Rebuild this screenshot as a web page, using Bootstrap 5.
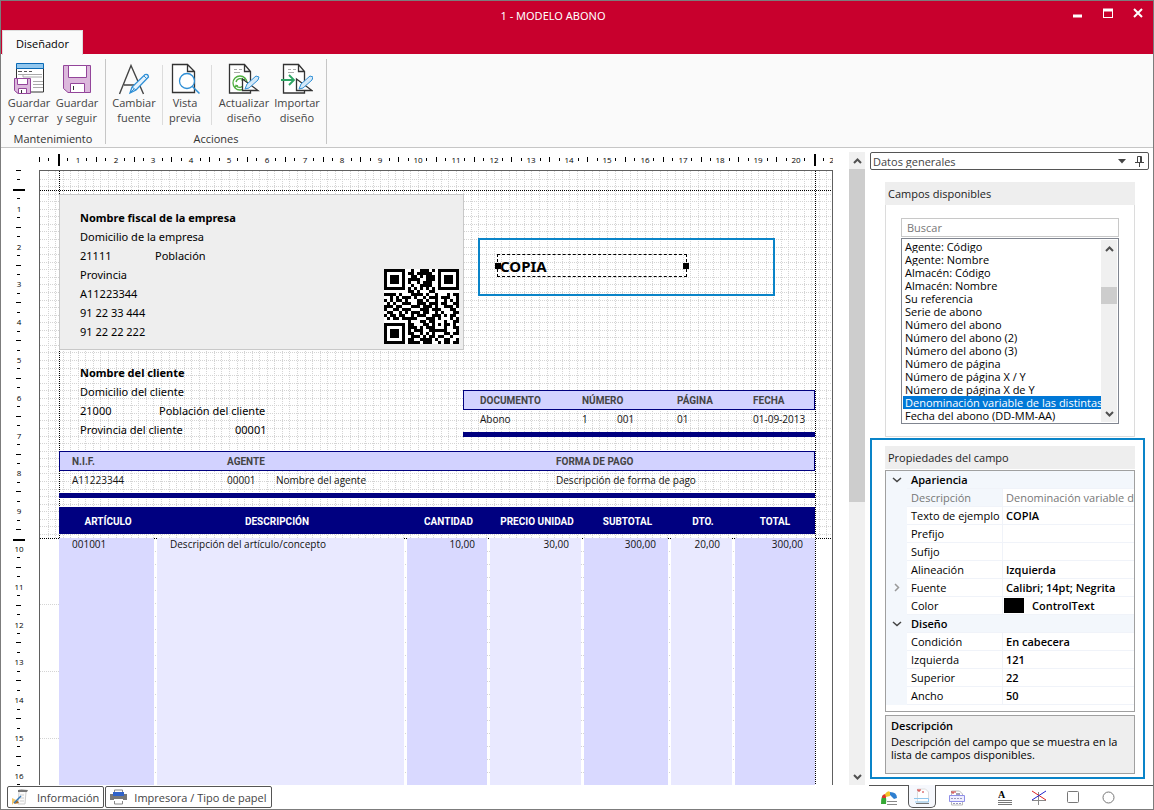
<!DOCTYPE html>
<html lang="es">
<head>
<meta charset="utf-8">
<meta name="viewport" content="width=device-width, initial-scale=1">
<title>1 - MODELO ABONO</title>
<link href="https://cdn.jsdelivr.net/npm/bootstrap@5.3.0/dist/css/bootstrap.min.css" rel="stylesheet">
<style>
body{font:11px/13px "Open Sans","Noto Sans",sans-serif;color:#000;background:#fff}
button,input,select{font:inherit;color:inherit}
.app{height:100vh;border:1px solid #7c7c7c}
/* title bar */
.titlebar{background:#c8002d;height:53px;color:#fff}
.titlebar .caption{font:11px/30px "Noto Sans",sans-serif}
.win-controls{right:0;top:0}
.win-controls button,.plain{background:none;border:0;padding:0;display:flex;align-items:center;justify-content:center}
.win-controls button{width:30px;height:24px}
.ribbon-tab{left:1px;bottom:-1px;width:81px;height:25px;background:#fafafa;border:1px solid #ddd;border-bottom:0;padding:0;color:#000}
/* ribbon */
.ribbon{background:#fafafa;border-bottom:1px solid #c6c6c6;height:94px;padding-top:5px;color:#444}
.ribbon-group{border-right:1px solid #c6c6c6;height:85px}
.ribbon-group .group-name{color:#333;line-height:16px;margin-top:6px}
.tool{background:none;border:0;padding:4px 0 0;line-height:15px;color:#444;text-align:center}
.tool svg{display:block;margin:0 auto}
.w44{width:44px}.w48{width:48px}.w50{width:50px}.w56{width:56px}
.rule-v{width:1px;background:#dcdcdc;height:60px;margin:6px 0 0}
/* canvas */
.vruler{width:38px}
.canvas{width:794px}
.paper{height:1123px;border:1px solid #606060;padding:23px 17px 0 19px}
.sheet-text{font-family:"Noto Sans","Open Sans",sans-serif;line-height:19px}
.company{width:405px;height:156px;background:#eee;border:1px solid #c8c8c8;padding:13px 4px 5px 20px}
.client{padding:13px 0 0 21px;height:101px}
.tabbed{display:inline-block}
.guide-v{top:0;bottom:0;width:1px;background:repeating-linear-gradient(#000 0 1px,transparent 1px 2px)}
.guide-h{left:0;right:0;height:1px;background:repeating-linear-gradient(90deg,#000 0 1px,transparent 1px 2px)}
.doc-table{table-layout:fixed;border-collapse:separate;border-spacing:0;font-size:10px;line-height:13px;width:100%;color:#111}
.doc-table th{font-family:Roboto,sans-serif;font-weight:700;color:#444}
.doc-table th,.doc-table td{padding:0;white-space:nowrap}
.band thead th{background:#d2d2ff;border:solid #000080;border-width:1px 0;height:20px}
.band thead th:first-child{border-left-width:1px}
.band thead th:last-child{border-right-width:1px}
.band tbody td{height:27px;padding-bottom:4px;border-bottom:5px solid #000080}
.doc-head{width:352px;right:17px;top:219px}
.band .lead-cell{padding-left:16px}
.band td.lead-cell{padding-left:17px}
.band .lead-cell-sm{padding-left:12px}
.band td.lead-cell-sm{padding-left:13px}
.lines thead th{background:#000080;color:#fff;height:27px;text-align:center;padding-top:1px}
.lines .wide-col{padding-right:10px}
.lines tbody td{height:570px;vertical-align:top;border-top:4px solid transparent;border-right:3px solid transparent;background:#e9e9ff;background-clip:padding-box}
.lines tbody td:nth-child(odd){background-color:#d9d9ff}
.lines tbody td:last-child{border-right:0}
.lines .num{text-align:right;padding-right:12px}
.callout{left:438px;top:67px;width:297px;height:58px;border:2px solid #0a84c8;padding:14px 17px}
.field{width:190px;height:23px;border:1px dashed #000;font:bold 15px/22px "Noto Sans",sans-serif;padding-left:2px;position:relative}
.grip{width:6px;height:6px;background:#000;position:absolute;top:8px}
.grip.start-grip{left:-3px}.grip.end-grip{right:-3px}
/* scrollbars */
.scroll{width:16px;background:#f0f0f0}
.scroll button{width:100%;height:17px}
.thumb{background:#cdcdcd;flex:5 1 0}
.track{flex:4 1 0}
/* side panel */
.side{width:284px;margin-left:4px}
.combo{border:1px solid #555;border-radius:2px;height:18px;margin:4px 4px 0 1px}
.combo select{appearance:none;border:0;background:none;padding:0 2px;color:#444;outline:0}
.group-title{background:#eee;height:23px;line-height:24px;padding-left:3px;color:#222;font-size:11px;margin:0;font-weight:400}
.fields-box{margin:12px 18px 0 16px}
.fields-body{border:1px solid #dcdcdc;border-top:0;height:232px;padding:13px 15px}
.search{width:100%;height:19px;border:1px solid #c8c8c8;padding:0 5px;outline:0;display:block}
.search::placeholder{color:#777;opacity:1}
.listbox{border:1px solid #808590;height:186px;margin-top:1px;padding:1px;overflow:hidden}
.listbox .list-group{width:198px;overflow:hidden}
.listbox .list-group-item{padding:0 2px;border:0;line-height:13px;white-space:nowrap;color:#000;border-radius:0}
.listbox .list-group-item.active{background:#0078d7;color:#fff;margin:0}
.list-thumb{height:17px;background:#cdcdcd;margin-top:30px}
.props{border:2px solid #0a84c8;margin:1px 8px 0 1px;padding:6px 8px 3px 13px;height:341px}
.props-grid{border:1px solid #a0a0a0;height:242px;margin-top:1px;overflow:hidden}
.ptable{table-layout:fixed;width:100%;border-collapse:separate;border-spacing:0;line-height:17px}
.ptable th,.ptable td{height:18px;padding:0 0 0 4px;font-weight:400;white-space:nowrap;overflow:hidden;border-bottom:1px solid #f0f3f9}
.ptable th+td{border-left:1px solid #f0f3f9;padding-left:3px;font-weight:600}
.ptable td:first-child{background:#f3f7fc;padding:0;border-color:#f3f7fc}
.ptable th{text-align:left}
.ptable .cat>*{background:#f3f7fc;font-weight:600}
.ptable .off{color:#777}
.ptable .off th{background:#f3f7fc}.ptable .off th+td{font-weight:400}
.ptable svg{display:block;margin:auto}
.swatch{display:inline-block;width:20px;height:15px;background:#000;vertical-align:top;margin:1px 8px 0 -2px}
.hint{background:#eee;border:1px solid #a0a0a0;height:59px;margin-top:3px;padding:3px 5px}
.hint b{font-weight:600;display:block;margin-bottom:3px}
/* bottom */
.status{height:24px}
.status .tabbtn{height:22px;border:1px solid #555;border-radius:2px;background:#fff;color:#444;display:flex;align-items:center;gap:7px;padding:0 4px;margin-top:1px}
.tools{width:284px;border-top:1px solid #555;padding-left:2px}
.tools button{height:23px}
.w35{width:35px}.w36{width:36px}.w41{width:41px}
.tools .current{border:1px solid #555;border-top:0;border-radius:0 0 5px 5px;background:#f6f8fd;width:28px;margin:-1px 0 0 1px}
</style>
</head>
<body>
<div class="app d-flex flex-column overflow-hidden">
  <header class="titlebar position-relative flex-shrink-0">
    <div class="caption text-center pe-5"><span>1 - MODELO ABONO</span></div>
    <div class="win-controls position-absolute d-flex">
      <button aria-label="Minimizar"><svg width="10" height="10"><path d="M0 8h9" stroke="#fff" stroke-width="3"/></svg></button>
      <button aria-label="Maximizar"><svg width="10" height="10" fill="none" stroke="#fff"><path d="M.5 9.5v-8M9.5 1v8.5M0 9.500h10"/><path d="M0 2h10" stroke-width="3"/></svg></button>
      <button aria-label="Cerrar"><svg width="10" height="10"><path d="M1 1l8 8M9 1L1 9" stroke="#fff" stroke-width="2"/></svg></button>
    </div>
    <button class="ribbon-tab position-absolute">Diseñador</button>
  </header>

  <div class="ribbon d-flex flex-shrink-0">
    <section class="ribbon-group px-1">
      <div class="d-flex">
        <button class="tool w48"><svg width="32" height="32" fill="none"><path d="M3.500 5v24h27V5" fill="#fff" stroke="#333"/><path d="M3.500.5h27v5h-27z" fill="#92c7ee" stroke="#0a6ab6"/><path d="M5 11.500h24M10 11v3h19M20 18.500h10M20 21.500h10M20 24.500h10" stroke="#aaa"/><path d="M5 8.500h4m2 0h3m2 0h3" stroke="#555"/><path d="M1.500 15.500h16v15H5l-3.500-3z" fill="#dcb8dc" stroke="#93459a"/><path d="M4.500 15.500h10v6h-10zM5.500 25.500h8v5h-8z" fill="#fff" stroke="#93459a"/><path d="M8.500 27v3" stroke="#333"/></svg>Guardar<br>y cerrar</button>
        <button class="tool w48"><svg width="32" height="32" fill="none" stroke="#93459a"><path d="M2.500 2.500h27v27H7l-4.500-4z" fill="#dcb8dc"/><path d="M7.500 2.500h18v12h-18zM9.500 20.500h14v9h-14z" fill="#fff"/><path d="M12.500 23v4" stroke="#333"/></svg>Guardar<br>y seguir</button>
      </div>
      <div class="group-name text-center">Mantenimiento</div>
    </section>
    <section class="ribbon-group">
      <div class="d-flex">
        <button class="tool w56"><svg width="32" height="32" fill="none" stroke="#444"><path d="M1.500 31L13 2.500 25.500 31M6 22h15" stroke-width="1.400"/><path d="M12 30l2-6L27 11.500q3-1 3.500 2.500L18 27z" fill="#e4f1fb" stroke="#2f8fd6" stroke-width="1.300"/><path d="M14 24l4 3M26 13l3 3M12 30l4-4" stroke="#2f8fd6"/></svg>Cambiar<br>fuente</button>
        <div class="rule-v"></div>
        <button class="tool w44 mx-0"><svg width="32" height="32" fill="none"><path d="M3.500 1.500h15l7 7v21h-22zM18.500 1.500v7h7" fill="#fff" stroke="#333" stroke-width="1.300"/><circle cx="18" cy="18" r="7.500" fill="#fff" stroke="#2f8fd6" stroke-width="1.300"/><path d="M23.500 23.500l7 7" stroke="#2f8fd6" stroke-width="1.500"/></svg>Vista<br>previa</button>
        <div class="rule-v ms-1 me-1"></div>
        <button class="tool w56"><svg width="32" height="32" fill="none"><path d="M1.500 30V1.500h15l6 7V30zM16.500 1.500v7h6" fill="#fff" stroke="#333" stroke-width="1.300"/><path d="M6 6.500h3m2 0h3M6 9.500h6" stroke="#aaa"/><circle cx="12" cy="20" r="8" fill="#fff"/><circle cx="12" cy="20" r="7" stroke="#4fae3f" stroke-width="1.300"/><path d="M8 19a4.500 4.500 0 0 1 8-1.500l1-2m-1 2-2.500-.5M16 21a4.500 4.500 0 0 1-8 1.500l-1 2m1-2 2 .5" stroke="#4fae3f" stroke-width="1.300"/><path d="M14.500 16v11.500H30z" fill="#fff" stroke="#333" stroke-width="1.300"/><path d="M17 26l2-5 9-8 3 1-1 3-9 8z" fill="#d5e9f8" stroke="#2f8fd6"/></svg>Actualizar<br>diseño</button>
        <button class="tool w50 me-1"><svg width="32" height="32" fill="none"><path d="M2.500 30V1.500h15l6 7V30zM17.500 1.500v7h6" fill="#fff" stroke="#333" stroke-width="1.300"/><path d="M7 6.500h3m2 0h3M7 9.500h6" stroke="#aaa"/><path d="M0 17h13M8 12l5 5-5 5" stroke="#2ea564" stroke-width="1.800"/><path d="M15.500 16v11.500H31z" fill="#fff" stroke="#333" stroke-width="1.300"/><path d="M18 26l2-5 9-8 3 1-1 3-9 8z" fill="#d5e9f8" stroke="#2f8fd6"/></svg>Importar<br>diseño</button>
      </div>
      <div class="group-name text-center">Acciones</div>
    </section>
  </div>

  <div class="d-flex flex-grow-1 overflow-hidden">
    <main class="d-flex flex-grow-1 overflow-hidden">
      <svg class="vruler flex-shrink-0" id="rulerV" height="1150"></svg>
      <div class="canvas flex-shrink-0">
        <svg id="rulerH" class="d-block w-100" height="22"></svg>
        <div class="paper position-relative">
          <svg id="grid" class="position-absolute top-0 start-0 w-100 h-100"></svg>
          <div class="guide-v position-absolute" style="left:19px"></div>
          <div class="guide-v position-absolute" style="left:775px"></div>
          <div class="guide-h position-absolute" style="top:19px"></div>
          <div class="guide-h position-absolute" style="top:367px"></div>
          <div class="position-relative">
            <div class="company sheet-text d-flex justify-content-between align-items-end">
              <div class="align-self-start"><b>Nombre fiscal de la empresa</b><br>Domicilio de la empresa<br><span class="tabbed" style="width:75px">21111</span>Población<br>Provincia<br>A11223344<br>91 22 33 444<br>91 22 22 222</div>
              <svg id="qr" width="75" height="75" viewBox="0 0 25 25" shape-rendering="crispEdges" role="img" aria-label="QR"><rect width="25" height="25" fill="#fff"/></svg>
            </div>
            <div class="client sheet-text"><b>Nombre del cliente</b><br>Domicilio del cliente<br><span class="tabbed" style="width:79px">21000</span>Población del cliente<br><span class="tabbed" style="width:155px">Provincia del cliente</span>00001</div>
            <table class="doc-table band">
              <colgroup><col style="width:168px"><col style="width:49px"><col style="width:280px"><col></colgroup>
              <thead><tr><th class="lead-cell-sm">N.I.F.</th><th colspan="2">AGENTE</th><th>FORMA DE PAGO</th></tr></thead>
              <tbody><tr><td class="lead-cell-sm">A11223344</td><td>00001</td><td>Nombre del agente</td><td>Descripción de forma de pago</td></tr></tbody>
            </table>
            <table class="doc-table lines" style="margin-top:9px">
              <colgroup><col style="width:98px"><col style="width:250px"><col style="width:83px"><col style="width:94px"><col style="width:87px"><col style="width:64px"><col></colgroup>
              <thead><tr><th>ARTÍCULO</th><th class="wide-col">DESCRIPCIÓN</th><th>CANTIDAD</th><th>PRECIO UNIDAD</th><th>SUBTOTAL</th><th>DTO.</th><th>TOTAL</th></tr></thead>
              <tbody><tr><td style="padding-left:13px">001001</td><td style="padding-left:13px">Descripción del artículo/concepto</td><td class="num">10,00</td><td class="num">30,00</td><td class="num">300,00</td><td class="num">20,00</td><td class="num">300,00</td></tr></tbody>
            </table>
          </div>
          <table class="doc-table band doc-head position-absolute">
            <colgroup><col style="width:119px"><col style="width:35px"><col style="width:60px"><col style="width:76px"><col></colgroup>
            <thead><tr><th class="lead-cell">DOCUMENTO</th><th colspan="2">NÚMERO</th><th>PÁGINA</th><th>FECHA</th></tr></thead>
            <tbody><tr><td class="lead-cell">Abono</td><td>1</td><td>001</td><td>01</td><td>01-09-2013</td></tr></tbody>
          </table>
          <div class="callout position-absolute"><div class="field">COPIA<span class="grip start-grip"></span><span class="grip end-grip"></span></div></div>
        </div>
      </div>
    </main>

    <div class="scroll d-flex flex-column flex-shrink-0 mt-1">
      <button class="plain flex-shrink-0" aria-label="Subir"><svg width="9" height="6"><path d="M1 5l3.500-3.500L8 5" fill="none" stroke="#505050" stroke-width="2"/></svg></button>
      <div class="thumb"></div>
      <div class="track"></div>
      <button class="plain flex-shrink-0" aria-label="Bajar"><svg width="9" height="6"><path d="M1 1l3.500 3.500L8 1" fill="none" stroke="#505050" stroke-width="2"/></svg></button>
    </div>

    <aside class="side flex-shrink-0">
      <div class="combo d-flex align-items-center">
        <select class="flex-grow-1" aria-label="Sección"><option>Datos generales</option></select>
        <svg width="9" height="5" class="me-1"><path d="M0 0h8L4 4.500z" fill="#444"/></svg>
        <button class="plain mx-1" aria-label="Fijar"><svg width="9" height="11" fill="none" stroke="#444"><path d="M2.500 6V.5h4V6M0 6.500h9M4.500 7v4M5.500 1v5"/></svg></button>
      </div>
      <section class="fields-box">
        <h2 class="group-title">Campos disponibles</h2>
        <div class="fields-body">
          <input class="search" type="search" placeholder="Buscar" aria-label="Buscar">
          <div class="listbox d-flex">
            <ul class="list-group list-group-flush" id="fieldList"></ul>
            <div class="scroll d-flex flex-column flex-shrink-0">
              <button class="plain" aria-label="Subir"><svg width="9" height="6"><path d="M1 5l3.500-3.500L8 5" fill="none" stroke="#505050" stroke-width="2"/></svg></button>
              <div class="list-thumb"></div>
              <button class="plain mt-auto" aria-label="Bajar"><svg width="9" height="6"><path d="M1 1l3.500 3.500L8 1" fill="none" stroke="#505050" stroke-width="2"/></svg></button>
            </div>
          </div>
        </div>
      </section>
      <section class="props">
        <h2 class="group-title">Propiedades del campo</h2>
        <div class="props-grid"><table class="ptable"><colgroup><col style="width:21px"><col style="width:95px"><col></colgroup><tbody id="props"></tbody></table></div>
        <div class="hint"><b>Descripción</b>Descripción del campo que se muestra en la lista de campos disponibles.</div>
      </section>
    </aside>
  </div>

  <footer class="status d-flex flex-shrink-0 justify-content-between">
    <div class="d-flex ms-1 ps-1" style="gap:1px">
      <button class="tabbtn" style="margin-left:-2px"><svg width="18" height="16"><path d="M6 1q2-1 10 0l-1 2H6z" fill="#777"/><path d="M7 3l-1 12h7l1-12" fill="#fafafa" stroke="#ccc"/><path d="M8 6h4m-4 3h4m-4 3h4" stroke="#ccc"/><path d="M0 9l4 2-4 5z" fill="#f2c66a"/><path d="M2 15l5-1-2-3z" fill="#b06a1c"/><path d="M2 14L9 7" stroke="#357ab8" stroke-width="1.500"/></svg><span>Información</span></button>
      <button class="tabbtn"><svg width="17" height="16"><path d="M4.500 3V1h8v2M4.500 12v3h8v-3" fill="none" stroke="#888"/><path d="M0 5h17v6H0z" fill="#777"/><path d="M3 3h11v4H3z" fill="#2f62c9"/><path d="M4 10h9v2H4z" fill="#fff"/></svg><span>Impresora / Tipo de papel</span></button>
    </div>
    <div class="tools d-flex">
      <button class="plain w36" aria-label="Colores"><svg width="17" height="14"><path d="M0 13q0-9 3-9t2 9z" fill="#35a835"/><path d="M1 7q0-4 4-4v4z" fill="#e0322a"/><path d="M4 3q3-4 5-2v4L5 6z" fill="#f3c52b"/><path d="M9 1q7 0 7 6l-3 1-4-4z" fill="#2e7fd0"/><path d="M6 9h11v5H6z" fill="#fff"/><path d="M6 10.500h10M6 13.500h10" stroke="#888"/></svg></button>
      <button class="plain current" aria-label="Cabecera"><svg width="16" height="16"><path d="M3.500 1h8l3 3v10h-11z" fill="#fff" stroke="#ddd"/><path d="M3 2h4M5 2v2M8 4h2" stroke="#c33"/><path d="M0 10.500h14.500V14H1" fill="none" stroke="#8fc7ee"/><path d="M2 15.500h13" stroke="#777"/></svg></button>
      <button class="plain w41" aria-label="Pie"><svg width="16" height="16"><path d="M2.500 1h8l3 3v11h-11z" fill="#fff" stroke="#bbb"/><path d="M2 2h5M4 2v2" stroke="#c33"/><path d="M7 4h4" stroke="#446"/><path d="M.5 5.500h15v6H.500z" fill="#efeeff" stroke="#8f8fe8"/><path d="M2 8.500h12M4 13.500h8" stroke="#99b" stroke-dasharray="2 1"/></svg></button>
      <button class="plain w36 ms-2 ps-1" aria-label="Texto"><svg width="14" height="16"><text x="0" y="8" font-family="Liberation Serif" font-weight="bold" font-size="10">A</text><path d="M0 10.500h14M0 12.500h14M0 14.500h14" stroke="#777"/></svg></button>
      <button class="plain w35" aria-label="Línea"><svg width="16" height="16"><path d="M7.500 2v13M1 10.500h14" stroke="#888"/><path d="M1 1l14 9" stroke="#d22"/><path d="M15 1L1 10" stroke="#22c"/></svg></button>
      <button class="plain w35" aria-label="Rectángulo"><svg width="13" height="13"><rect x=".5" y=".5" width="11" height="11" rx="1" fill="#fff" stroke="#777"/></svg></button>
      <button class="plain w35" aria-label="Círculo"><svg width="13" height="13"><circle cx="6.500" cy="6.500" r="5.500" fill="#fff" stroke="#777"/></svg></button>
    </div>
  </footer>
</div>
<script src="https://cdn.jsdelivr.net/npm/bootstrap@5.3.0/dist/js/bootstrap.bundle.min.js"></script>
<script>
const CM = 37.8, R = Math.round;
const byId = id => document.getElementById(id);

// rulers: a mark every quarter of a centimetre, a figure on each whole one
function ruler(vertical, length, origin, margins) {
  let out = '';
  for (let q = 0; q * CM / 4 < length; q++) {
    const p = R(origin + q * CM / 4), margin = margins.includes(q);
    if (q % 4 === 0 && q) {
      out += vertical ? `<text x="18" y="${p + 4}">${q / 4}</text>` : `<text x="${p + 1}" y="15">${q / 4}</text>`;
      continue;
    }
    const len = margin ? 12 : q % 2 ? 3 : 5, th = margin ? 2 : 1;
    out += vertical ? `<rect x="${18 - R(len / 2)}" y="${p}" width="${len}" height="${th}"/>`
                    : `<rect x="${p}" y="${12 - R(len / 2)}" width="${th}" height="${len}"/>`;
  }
  return `<g font-family="Open Sans, sans-serif" font-size="8" text-anchor="middle" shape-rendering="crispEdges">${out}</g>`;
}
byId('rulerH').innerHTML = ruler(false, 810, 0, [2, 82]);
byId('rulerV').innerHTML = ruler(true, 620, 22, [2, 39]);

// fine grid of the header area, then the sparse marks of the body
let g = '';
for (let i = 1; i * CM / 5 < 794; i++) { const x = R(i * CM / 5); g += `<path d="M${x}.5 0V368"/>`; }
for (let i = 1; i * CM / 5 < 368; i++) { const y = R(i * CM / 5); g += `<path d="M0 ${y}.5H793"/>`; }
for (let y = 433; y < 1100; y += 67) g += `<path d="M0 ${y}.5H19"/>`;
for (let y = 380; y < 1100; y += 13) g += `<path d="M19 ${y}.5H775"/>`;
byId('grid').innerHTML = `<g stroke="#d4d4d4" stroke-dasharray="1 1" shape-rendering="crispEdges">${g}</g>`;

const QR = [
'1111111001001110101111111','1000001011011111001000001','1011101001101011101011101','1011101011110011101011101','1011101010010111001011101',
'1000001001001111001000001','1111111010101010101111111','0000000011010001100000000','1111010001111010010001011','0010101110100101110111001',
'1010110100011010010010101','0101001110011101110110011','1110110001110111010011101','1001101110001110111000110','0110010101110110010100011',
'1011011001011100111010110','0101101111100011101000101','0000000010001101100010011','1111111011000110101011010','1000001011101011100010011',
'1011101010111001111110001','1011101011001010100011011','1011101001110101101100100','1000001011001111010011001','1111111011110111001011011'];
byId('qr').innerHTML += QR.map((r, y) => [...r].map((c, x) => c === '1' ? `<rect x="${x}" y="${y}" width="1" height="1"/>` : '').join('')).join('');

const fields = ['Agente: Código','Agente: Nombre','Almacén: Código','Almacén: Nombre','Su referencia','Serie de abono','Número del abono','Número del abono (2)','Número del abono (3)','Número de página','Número de página X / Y','Número de página X de Y','Denominación variable de las distintas','Fecha del abono (DD-MM-AA)'];
byId('fieldList').innerHTML = fields.map((t, i) => `<li class="list-group-item${i === 12 ? ' active' : ''}">${t}</li>`).join('');

const down = '<svg width="10" height="6"><path d="M1 1l4 3.500L9 1" fill="none" stroke="#444" stroke-width="1.500"/></svg>';
const right = '<svg width="6" height="9"><path d="M1 1l3.500 3.500L1 8" fill="none" stroke="#999" stroke-width="1.500"/></svg>';
const props = [['Apariencia'],['Descripción','Denominación variable de','off'],['Texto de ejemplo','COPIA'],['Prefijo',''],['Sufijo',''],['Alineación','Izquierda'],['Fuente','Calibri; 14pt; Negrita'],['Color','<span class="swatch"></span>ControlText'],['Diseño'],['Condición','En cabecera'],['Izquierda','121'],['Superior','22'],['Ancho','50']];
byId('props').innerHTML = props.map(([n, v, c]) => v === undefined
  ? `<tr class="cat"><td>${down}</td><th colspan="2">${n}</th></tr>`
  : `<tr class="${c || ''}"><td>${n === 'Fuente' ? right : ''}</td><th>${n}</th><td>${v}</td></tr>`).join('');
</script>
</body>
</html>
